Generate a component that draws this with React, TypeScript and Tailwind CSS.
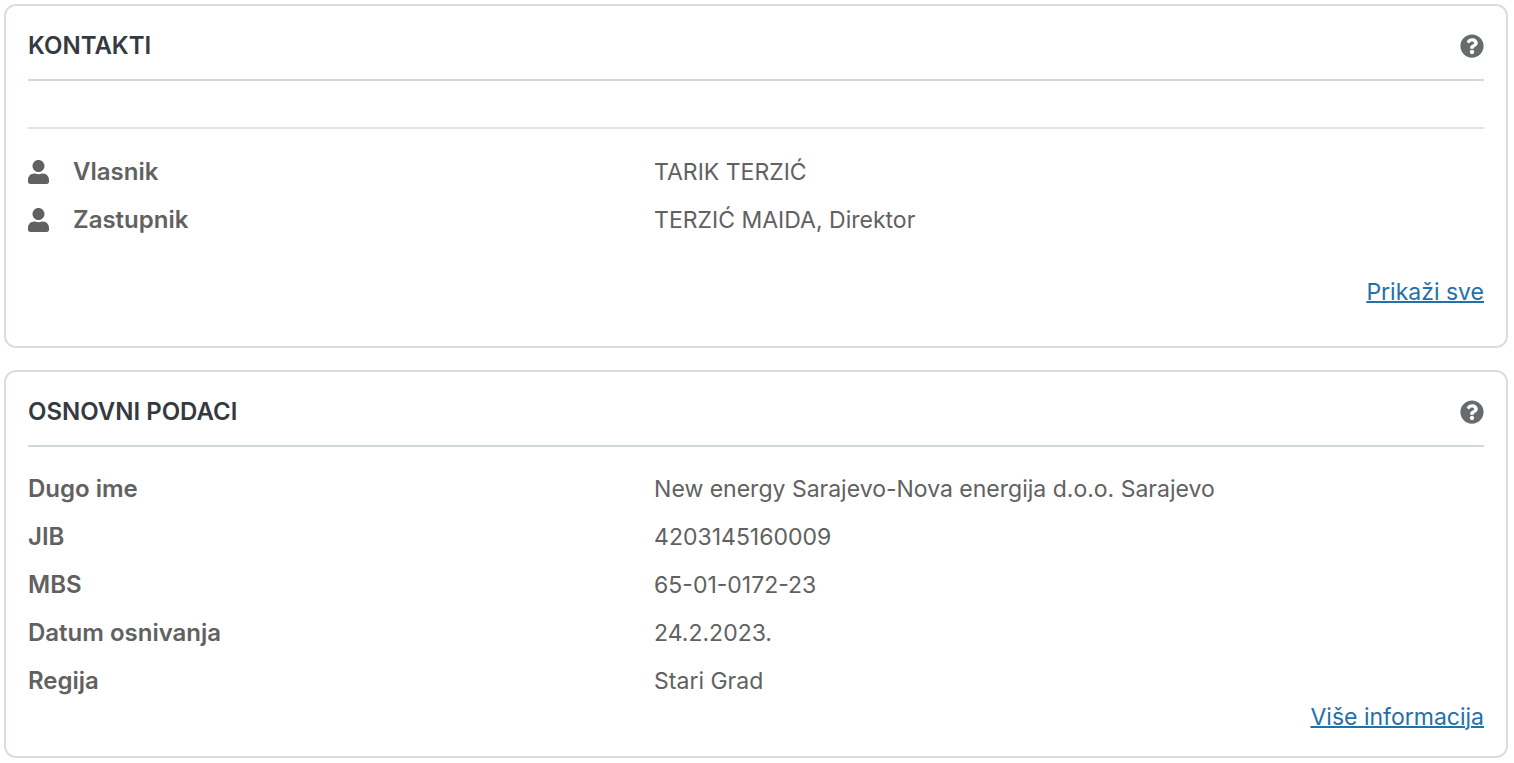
import React from 'react';
import { FaQuestionCircle, FaUser } from 'react-icons/fa';

interface InfoRow {
  label: string;
  value: string;
  person?: boolean;
}

interface InfoCardProps {
  title: string;
  linkText: string;
  children: React.ReactNode;
  className?: string;
}

const contacts: InfoRow[] = [
  { label: 'Vlasnik', value: 'TARIK TERZIĆ', person: true },
  { label: 'Zastupnik', value: 'TERZIĆ MAIDA, Direktor', person: true },
];

const basicData: InfoRow[] = [
  { label: 'Dugo ime', value: 'New energy Sarajevo-Nova energija d.o.o. Sarajevo' },
  { label: 'JIB', value: '4203145160009' },
  { label: 'MBS', value: '65-01-0172-23' },
  { label: 'Datum osnivanja', value: '24.2.2023.' },
  { label: 'Regija', value: 'Stari Grad' },
];

function InfoCard({ title, linkText, children, className = '' }: InfoCardProps) {
  return (
    <section className={`rounded-xl border-2 border-[#d9dfe0] px-[22px] pt-[21px] ${className}`}>
      <header className="flex items-center justify-between border-b-2 border-[#d0d9d9] pb-[14px]">
        <h2 className="text-2xl leading-[38px] font-semibold text-[#343a40]">{title}</h2>
        <button type="button" aria-label="Pomoć" className="text-[#666b6e]">
          <FaQuestionCircle className="size-6" />
        </button>
      </header>
      {children}
      <div className="text-right leading-6">
        <a href="#" className="text-[23px] text-[#2470a8] underline decoration-2">
          {linkText}
        </a>
      </div>
    </section>
  );
}

function InfoList({ rows }: { rows: InfoRow[] }) {
  return (
    <dl>
      {rows.map((row) => (
        <div key={row.label} className="grid grid-cols-[43%_57%] leading-[48px]">
          <dt className="flex items-center font-semibold">
            {row.person && <FaUser className="mr-6 h-6 w-[21px]" />}
            {row.label}
          </dt>
          <dd className="text-[23px]">{row.value}</dd>
        </div>
      ))}
    </dl>
  );
}

export default function App() {
  return (
    <main className="flex flex-col gap-[22px] bg-white py-1 pr-[6px] pl-1 font-['Inter',sans-serif] text-2xl text-[#616161]">
      <InfoCard title="KONTAKTI" linkText="Prikaži sve" className="pb-[42px]">
        <hr className="mt-[46px] mb-[19px] border-t-2 border-[#e2e6e6]" />
        <div className="pb-9">
          <InfoList rows={contacts} />
        </div>
      </InfoCard>
      <InfoCard title="OSNOVNI PODACI" linkText="Više informacija" className="pb-[27px]">
        <div className="pt-[18px]">
          <InfoList rows={basicData} />
        </div>
      </InfoCard>
    </main>
  );
}
